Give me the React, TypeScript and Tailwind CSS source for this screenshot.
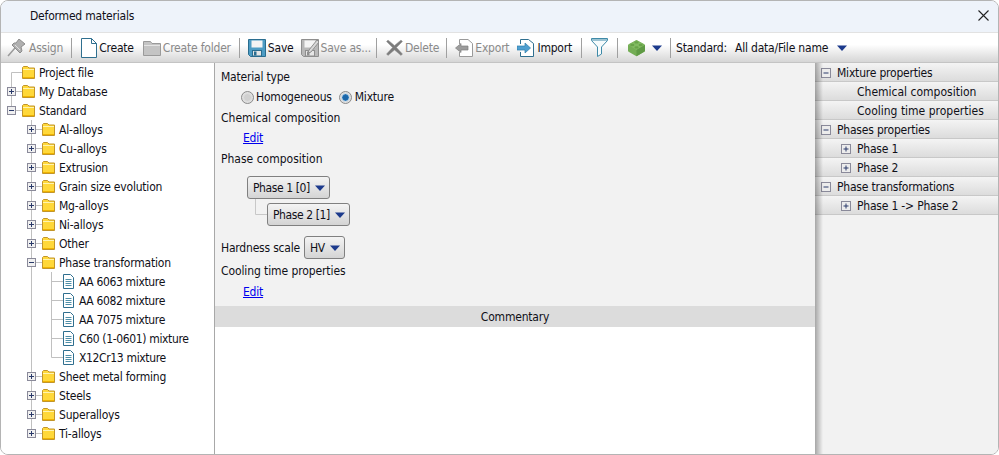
import React from "react";

const Sep = ({ className = "" }: { className?: string }) => <div className={`w-px h-5 bg-[#a0a0a0] shrink-0 ${className}`} />;

const Arrow = ({ className = "" }: { className?: string }) => (
  <svg width="10" height="6" viewBox="0 0 10 6" className={`shrink-0 ${className}`}>
    <path d="M0 0.5H10L5 6Z" fill="#1c3a8c" />
  </svg>
);

const Folder = ({ x }: { x: number }) => (
  <g transform={`translate(${x} 3)`}>
    <path d="M0.5 12.5V1.5L1.5 0.5H5.5L7 2H12.5V12.5Z" fill="#ffd83a" stroke="#c2952a" />
    <path d="M1 3.5H12" stroke="#fff4b0" />
    <path d="M1 11.5H12" stroke="#f0b400" />
  </g>
);

const Doc = ({ x }: { x: number }) => (
  <g transform={`translate(${x} 2)`} fill="none">
    <path d="M0.5 14.5V0.5H7.5L10.5 3.5V14.5Z" fill="#fff" stroke="#2f6f8f" />
    <path d="M2.5 5.5H8.5M2.5 7.5H8.5M2.5 9.5H8.5M2.5 11.5H8.5" stroke="#4f8fa8" />
  </g>
);

const Exp = ({ x, open, y = 5 }: { x: number; open?: boolean; y?: number }) => (
  <g transform={`translate(${x} ${y})`}>
    <rect x="0.5" y="0.5" width="8" height="8" fill="#f0f0f0" stroke="#8a8a9a" />
    <path d="M2 4.5H7" stroke="#2a3a6a" />
    {!open && <path d="M4.5 2V7" stroke="#2a3a6a" />}
  </g>
);

type RowProps = { level: number; kind: "folder" | "doc"; label: string; exp?: "plus" | "minus"; guides: number[]; lastAt?: boolean; up?: boolean };

const TreeRow = ({ level, kind, label, exp, guides, lastAt, up = true }: RowProps) => {
  const cx = 10.5 + level * 20;
  const iconX = kind === "folder" ? 21 + level * 20 : 22 + level * 20;
  const w = 38 + level * 20;
  return (
    <div className="flex items-center h-[19px]">
      <svg width={w} height="19" viewBox={`0 0 ${w} 19`} className="shrink-0">
        {guides.map((g) => (
          <path key={g} d={`M${10.5 + g * 20} 0V19`} stroke="#c0c0c0" />
        ))}
        <path d={`M${cx} ${up ? 0 : 9.5}V${lastAt ? 9.5 : 19}`} stroke="#c0c0c0" />
        <path d={`M${cx} 9.5H${iconX}`} stroke="#c0c0c0" />
        {exp && <Exp x={cx - 4.5} open={exp === "minus"} />}
        {kind === "folder" ? <Folder x={iconX} /> : <Doc x={iconX} />}
      </svg>
      <span className={`whitespace-nowrap ${kind === "doc" ? "tracking-[-0.35px]" : ""}`}>{label}</span>
    </div>
  );
};

const Tree = () => {
  const subs = ["Al-alloys", "Cu-alloys", "Extrusion", "Grain size evolution", "Mg-alloys", "Ni-alloys", "Other"];
  const docs = ["AA 6063 mixture", "AA 6082 mixture", "AA 7075 mixture", "C60 (1-0601) mixture", "X12Cr13 mixture"];
  const after = ["Sheet metal forming", "Steels", "Superalloys"];
  return (
    <div className="w-[214px] shrink-0 bg-white border-r border-[#a8a8a8]">
      <TreeRow level={0} kind="folder" label="Project file" guides={[]} up={false} />
      <TreeRow level={0} kind="folder" label="My Database" exp="plus" guides={[]} />
      <TreeRow level={0} kind="folder" label="Standard" exp="minus" guides={[]} lastAt />
      {subs.map((s) => (
        <TreeRow key={s} level={1} kind="folder" label={s} exp="plus" guides={[]} />
      ))}
      <TreeRow level={1} kind="folder" label="Phase transformation" exp="minus" guides={[]} />
      {docs.map((d, i) => (
        <TreeRow key={d} level={2} kind="doc" label={d} guides={[1]} lastAt={i === docs.length - 1} />
      ))}
      {after.map((s) => (
        <TreeRow key={s} level={1} kind="folder" label={s} exp="plus" guides={[]} />
      ))}
      <TreeRow level={1} kind="folder" label="Ti-alloys" exp="plus" guides={[]} lastAt />
    </div>
  );
};

const Tool = ({ icon, label, off, className = "" }: { icon: React.ReactNode; label: string; off?: boolean; className?: string }) => (
  <div className={`flex items-center shrink-0 ${off ? "text-[#8a8a8a]" : "text-[#101018]"} ${className}`}>
    {icon}
    <span className="ml-[2px] whitespace-nowrap">{label}</span>
  </div>
);

const Pin = () => (
  <svg width="20" height="18" viewBox="0 0 20 18" className="shrink-0">
    <path d="M1 17L8 9" stroke="#9a9a9a" strokeWidth="1.5" />
    <path d="M5 6L13 14L15 12L14 8L18 5L12 0L9 4L7 4Z" fill="#b0b0b0" stroke="#8c8c8c" />
    <path d="M8 6L13 11" stroke="#dedede" />
  </svg>
);
const NewDoc = () => (
  <svg width="16" height="20" viewBox="0 0 16 20" className="shrink-0">
    <path d="M0.5 19.5V0.5H10.5L15.5 5.5V19.5Z" fill="#fff" stroke="#2f6f8f" />
    <path d="M10.5 0.5V5.5H15.5" fill="none" stroke="#2f6f8f" />
  </svg>
);
const GrayFolder = () => (
  <svg width="18" height="16" viewBox="0 0 18 16" className="shrink-0">
    <path d="M0.5 15.5V1.5H7.5L9 3.5H17.5V15.5Z" fill="#c4c4c4" stroke="#9a9a9a" />
    <path d="M1 5.5H17" stroke="#e4e4e4" />
  </svg>
);
const Floppy = ({ off }: { off?: boolean }) => {
  const a = off ? "#b8b8b8" : "#4d9cc4";
  const b = off ? "#8e8e8e" : "#2a6d8f";
  return (
    <svg width="18" height="18" viewBox="0 0 18 18" className="shrink-0">
      <path d="M0.5 0.5H17.5V17.5H2.5L0.5 15.5Z" fill={a} stroke={b} />
      <rect x="3.5" y="1.5" width="11" height="7" fill="#f4f4f4" />
      <rect x="4.5" y="11.5" width="9" height="5.5" fill="#e6e6e6" stroke={b} />
      <rect x="6" y="12.5" width="2.5" height="4" fill={b} />
      {off && <path d="M8 11L16 1L18 3L10 13L7 14Z" fill="#d8d8d8" stroke="#8e8e8e" />}
    </svg>
  );
};
const Cross = () => (
  <svg width="17" height="17" viewBox="0 0 17 17" className="shrink-0">
    <path d="M2 1L8.5 6.5L15 1L16.5 2.5L10.5 8.5L16.5 15L15 16.5L8.5 11L2 16.5L0.5 15L6.5 8.5L0.5 2.5Z" fill="#7c7c7c" stroke="#9a9a9a" strokeWidth="0.5" />
  </svg>
);
const ExportIcon = () => (
  <svg width="18" height="18" viewBox="0 0 18 18" className="shrink-0">
    <path d="M4.5 5V0.5H13L17.5 4.5V17.5H4.5V13" fill="#fff" stroke="#9a9a9a" />
    <path d="M0.5 9L6 4.5V7H13V11H6V13.5Z" fill="#9c9c9c" stroke="#7f7f7f" strokeWidth="0.7" />
  </svg>
);
const ImportIcon = () => (
  <svg width="18" height="18" viewBox="0 0 18 18" className="shrink-0">
    <path d="M3.5 5V0.5H11.5L16.5 4.5V17.5H3.5V13" fill="#fff" stroke="#2f6f8f" />
    <path d="M0 7H8V4L13.5 9L8 14V11H0Z" fill="#4f9fd0" stroke="#2f7fae" strokeWidth="0.7" />
  </svg>
);
const Funnel = () => (
  <svg width="17" height="19" viewBox="0 0 17 19" className="shrink-0">
    <path d="M0.5 0.5H16.5V2.5L10.5 9V16L6.5 18.5V9L0.5 2.5Z" fill="#f6fbfc" stroke="#3f8aa8" />
    <path d="M1 2H16" stroke="#3f8aa8" />
  </svg>
);
const Brick = () => (
  <svg width="19" height="18" viewBox="0 0 19 18" className="shrink-0">
    <path d="M1 6.5Q1 5.5 2 5L9 1.2Q9.5 1 10 1.2L17 5Q18 5.5 18 6.5V11.5Q18 12.5 17 13L10 17Q9.5 17.3 9 17L2 13Q1 12.5 1 11.5Z" fill="#74ad55" />
    <path d="M1.5 6L9.5 1.2L17.5 6L9.5 11Z" fill="#82bb62" />
    <path d="M9.5 11V17.2L17 12.8Q18 12.3 18 11.5V6Z" fill="#5f9a45" />
    <ellipse cx="9.5" cy="3.4" rx="2.1" ry="1.2" fill="#68a349" />
    <ellipse cx="5.3" cy="6" rx="2.1" ry="1.2" fill="#68a349" />
    <ellipse cx="13.7" cy="6" rx="2.1" ry="1.2" fill="#68a349" />
    <ellipse cx="9.5" cy="8.4" rx="2.1" ry="1.2" fill="#68a349" />
  </svg>
);

const Toolbar = () => (
  <div className="flex items-center h-[31px] pl-[6px] shrink-0 bg-gradient-to-b from-white from-40% to-[#d6d6d6] border-t border-[#e2e2e2] border-b border-b-[#c4c4c4]">
    <Tool off icon={<Pin />} label="Assign" />
    <Sep className="ml-2" />
    <Tool icon={<NewDoc />} label="Create" className="ml-[9px]" />
    <Tool off icon={<GrayFolder />} label="Create folder" className="ml-[9px]" />
    <Sep className="ml-2" />
    <Tool icon={<Floppy />} label="Save" className="ml-2" />
    <Tool off icon={<Floppy off />} label="Save as..." className="ml-[7px]" />
    <Sep className="ml-[5px]" />
    <Tool off icon={<Cross />} label="Delete" className="ml-[9px]" />
    <Sep className="ml-[7px]" />
    <Tool off icon={<ExportIcon />} label="Export" className="ml-2" />
    <Tool icon={<ImportIcon />} label="Import" className="ml-[8px]" />
    <Sep className="ml-[9px]" />
    <div className="ml-[9px]"><Funnel /></div>
    <Sep className="ml-[9px]" />
    <div className="ml-[9px]"><Brick /></div>
    <Arrow className="ml-[6px]" />
    <Sep className="ml-[8px]" />
    <span className="ml-[5px] whitespace-nowrap text-[#101018]">Standard:</span>
    <span className="ml-[8px] whitespace-nowrap text-[#101018]">All data/File name</span>
    <Arrow className="ml-[9px]" />
  </div>
);

const Radio = ({ on }: { on?: boolean }) => (
  <svg width="13" height="13" viewBox="0 0 13 13" className="shrink-0">
    <circle cx="6.5" cy="6.5" r="6" fill="#e0e0e0" stroke="#8a8a8a" />
    <circle cx="6.5" cy="6.5" r="4" fill={on ? "#2f7fc0" : "#d0d0d0"} stroke={on ? "#e8e8e8" : "#dedede"} />
    {on && <circle cx="6.5" cy="6.5" r="2.6" fill="#1c66a8" />}
  </svg>
);

const Drop = ({ label, className = "", arrow = "ml-[5px]" }: { label: string; className?: string; arrow?: string }) => (
  <div className={`flex items-center h-[23px] pl-[5px] pr-[4px] rounded-[3px] border border-[#808080] bg-gradient-to-b from-[#f4f4f4] to-[#d4d4d4] w-fit ${className}`}>
    <span className="whitespace-nowrap tracking-[-0.4px]">{label}</span>
    <Arrow className={arrow} />
  </div>
);

const Edit = ({ className = "mt-[7px]" }: { className?: string }) => <a className={`block ml-[22px] h-[12px] leading-[12px] text-[#0000ee] underline ${className}`}>Edit</a>;

const Center = () => (
  <div className="flex-1 flex flex-col min-w-0">
    <div className="h-[243px] bg-[#f2f2f2] pl-[6px] pt-[7px] shrink-0">
      <div className="h-[14px] leading-[14px]">Material type</div>
      <div className="flex items-center h-[14px] mt-[6px] ml-[20px]">
        <Radio />
        <span className="ml-[2px]">Homogeneous</span>
        <div className="ml-[7px]"><Radio on /></div>
        <span className="ml-[3px]">Mixture</span>
      </div>
      <div className="h-[14px] leading-[14px] mt-[7px] tracking-normal">Chemical composition</div>
      <Edit />
      <div className="h-[14px] leading-[14px] mt-[8px] tracking-normal">Phase composition</div>
      <Drop label="Phase 1 [0]" className="ml-[26px] mt-[10px]" />
      <div className="flex mt-[4px] ml-[34px]">
        <svg width="12" height="16" viewBox="0 0 12 16" className="shrink-0 -mt-[4px]">
          <path d="M0.5 0V15.5H12" stroke="#c8c8c8" fill="none" />
        </svg>
        <Drop label="Phase 2 [1]" />
      </div>
      <div className="flex items-center mt-[10px] h-[23px]">
        <span className="whitespace-nowrap">Hardness scale</span>
        <Drop label="HV" className="ml-[4px]" arrow="ml-[5px]" />
      </div>
      <div className="h-[14px] leading-[14px] mt-[5px] tracking-[-0.1px]">Cooling time properties</div>
      <Edit className="mt-[8px]" />
    </div>
    <div className="h-[21px] bg-[#dcdcdc] flex items-center justify-center shrink-0">Commentary</div>
    <div className="flex-1 bg-white mt-px" />
  </div>
);

const SideRow = ({ level, label, exp, indentOnly, wide }: { level: number; label: string; exp?: "plus" | "minus"; indentOnly?: boolean; wide?: boolean }) => (
  <div className="flex items-center h-[19px] pt-[2px] border-b border-[#c8c8c8] bg-gradient-to-b from-[#f4f4f4] to-[#dcdcdc]">
    <div className={`shrink-0 ${level === 0 ? "w-[6px]" : "w-[26px]"}`} />
    {exp && (
      <svg width="10" height="10" viewBox="0 0 10 10" className="shrink-0">
        <rect x="0.5" y="0.5" width="9" height="9" fill="#ececec" stroke="#8a8a9a" />
        <path d="M2.5 5H7.5" stroke="#2a3a6a" />
        {exp === "plus" && <path d="M5 2.5V7.5" stroke="#2a3a6a" />}
      </svg>
    )}
    {indentOnly && <div className="w-[10px] shrink-0" />}
    <span className={`ml-[6px] whitespace-nowrap ${wide ? "tracking-normal" : ""}`}>{label}</span>
  </div>
);

const Side = () => (
  <div className="w-[183px] shrink-0 relative bg-[#f2f2f2]">
    <SideRow level={0} label="Mixture properties" exp="minus" />
    <SideRow level={1} label="Chemical composition" indentOnly wide />
    <SideRow level={1} label="Cooling time properties" indentOnly wide />
    <SideRow level={0} label="Phases properties" exp="minus" />
    <SideRow level={1} label="Phase 1" exp="plus" />
    <SideRow level={1} label="Phase 2" exp="plus" />
    <SideRow level={0} label="Phase transformations" exp="minus" />
    <SideRow level={1} label="Phase 1 -> Phase 2" exp="plus" />
    <div className="absolute left-0 top-0 bottom-0 w-[8px] bg-gradient-to-r from-[#00000050] to-transparent pointer-events-none" />
  </div>
);

export default function App() {
  return (
    <div className="w-[999px] h-[455px] bg-white overflow-hidden text-[12px] tracking-[-0.2px] text-[#101018] [font-family:'DejaVu_Sans',sans-serif] [font-stretch:condensed]">
      <div className="w-full h-full flex flex-col rounded-[8px] border border-[#b4b4b4] overflow-hidden">
        <div className="flex items-center h-[31px] pb-[2px] shrink-0 bg-[#eef3fa] pl-[29px] pr-[9px] justify-between">
          <span>Deformed materials</span>
          <svg width="11" height="11" viewBox="0 0 11 11">
            <path d="M0.5 0.5L10.5 10.5M10.5 0.5L0.5 10.5" stroke="#222" strokeWidth="1.1" />
          </svg>
        </div>
        <Toolbar />
        <div className="flex flex-1 min-h-0">
          <Tree />
          <Center />
          <Side />
        </div>
      </div>
    </div>
  );
}
